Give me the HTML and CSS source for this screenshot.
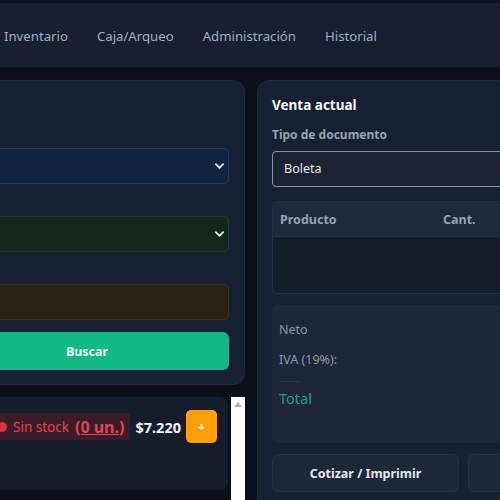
FILE: index.html
```html
<!DOCTYPE html>
<html lang="es">
<head>
  <meta charset="UTF-8">
  <title>Punto de Venta</title>
  <link rel="stylesheet" href="styles.css">
</head>
<body>
  <header class="topbar">
    <nav class="menu">
      <a class="menu-link">Inventario</a>
      <a class="menu-link">Caja/Arqueo</a>
      <a class="menu-link">Administración</a>
      <a class="menu-link">Historial</a>
    </nav>
  </header>

  <main class="layout">
    <section class="col-izq">
      <div class="card buscador">
        <div class="campo campo-primero">
          <div class="selector sel-azul">
            <svg class="chevron" viewBox="0 0 10 6"><path d="M1 1l4 4 4-4" /></svg>
          </div>
        </div>
        <div class="campo">
          <div class="selector sel-verde">
            <svg class="chevron" viewBox="0 0 10 6"><path d="M1 1l4 4 4-4" /></svg>
          </div>
        </div>
        <div class="campo">
          <div class="selector sel-ocre"></div>
        </div>
        <button class="btn-buscar">Buscar</button>
      </div>

      <div class="resultados">
        <div class="lista">
          <div class="item-card">
            <div class="item-fila">
              <span class="stock-badge"><span class="punto"></span>Sin stock <u class="stock-cant">(0 un.)</u></span>
              <span class="precio">$7.220</span>
              <button class="btn-agregar">+</button>
            </div>
          </div>
        </div>
        <div class="scroll-track"><span class="scroll-up"></span></div>
      </div>
    </section>

    <section class="card venta">
      <h2 class="venta-titulo">Venta actual</h2>
      <label class="etiqueta">Tipo de documento</label>
      <div class="doc-select">Boleta</div>

      <div class="tabla">
        <div class="tabla-head">
          <span class="th-producto">Producto</span>
          <span class="th-cant">Cant.</span>
        </div>
        <div class="tabla-body"></div>
      </div>

      <div class="totales">
        <div class="tot-linea">Neto</div>
        <div class="tot-linea">IVA (19%):</div>
        <hr class="tot-sep">
        <div class="tot-total">Total</div>
      </div>

      <div class="acciones">
        <button class="btn-accion">Cotizar / Imprimir</button>
        <button class="btn-accion"></button>
      </div>
    </section>
  </main>
</body>
</html>
```

FILE: styles.css
```css
body {
  margin: 0;
  background: #0b0f19;
  color: #e2e8f0;
  font-family: "Noto Sans", "Open Sans", sans-serif;
  overflow: hidden;
  height: 500px;
}

.topbar {
  border-top: 3px solid #0d1220;
  background: #161e2f;
  height: 64px;
}

.menu {
  display: flex;
  align-items: center;
  height: 100%;
  gap: 29px;
  padding: 2px 0 0 4px;
  box-sizing: border-box;
}

.menu-link {
  color: #a4aebe;
  font-size: 13.2px;
}

.layout {
  display: grid;
  grid-template-columns: 380px 420px;
  gap: 12px;
  margin-left: -135px;
  margin-top: 13px;
}

.card {
  background: #172033;
  border: 1px solid #1f2a3e;
  border-radius: 12px;
}

/* columna izquierda */
.buscador {
  padding: 16px 15px 14px;
  display: flex;
  flex-direction: column;
}

.campo { padding-top: 32px; }
.campo-primero { padding-top: 51px; }

.selector {
  height: 34px;
  border: 1px solid;
  border-radius: 5px;
  display: flex;
  align-items: center;
  justify-content: flex-end;
  padding-right: 4px;
}

.sel-azul { background: #0f2341; border-color: #1e3b62; }
.sel-verde { background: #14261a; border-color: #1f3a26; }
.sel-ocre { background: #282211; border-color: #3a311c; }

.chevron {
  width: 9px;
  height: 6px;
  fill: none;
  stroke: #e5ecf5;
  stroke-width: 2;
  stroke-linecap: round;
  stroke-linejoin: round;
}

.btn-buscar {
  margin-top: 12px;
  height: 38px;
  border: none;
  border-radius: 6px;
  background: #14b886;
  color: #e9fff7;
  font-family: inherit;
  font-size: 12.5px;
  font-weight: 700;
  padding-left: 70px;
}

/* lista de productos con su barra de scroll */
.resultados {
  margin-top: 12px;
  height: 140px;
  display: flex;
}

.lista {
  flex: 1;
  padding-right: 3px;
}

.scroll-track {
  width: 14px;
  background: #fff;
  display: flex;
  justify-content: center;
  padding-top: 5px;
  box-sizing: border-box;
}

.scroll-up {
  width: 0;
  height: 0;
  border-left: 4px solid transparent;
  border-right: 4px solid transparent;
  border-bottom: 5px solid #b0b0b0;
}

.item-card {
  height: 93px;
  background: #151d2d;
  border-radius: 8px;
  padding-top: 13px;
  box-sizing: border-box;
}

.item-fila {
  display: flex;
  align-items: center;
  justify-content: flex-end;
  gap: 5px;
  padding-right: 11px;
}

.stock-badge {
  display: flex;
  align-items: center;
  background: #3a1b27;
  color: #e2454d;
  font-size: 13.5px;
  height: 27px;
  padding: 0 6px 0 40px;
  border-radius: 3px;
}

.punto {
  width: 10px;
  height: 10px;
  border-radius: 50%;
  background: #d9343b;
  margin-right: 6px;
}

.stock-cant {
  font-size: 16px;
  font-weight: 700;
  margin-left: 6px;
}

.precio {
  font-size: 14.5px;
  font-weight: 700;
  color: #f1f5f9;
}

.btn-agregar {
  width: 31px;
  height: 33px;
  border: none;
  border-radius: 5px;
  background: #ff9f0a;
  color: #fff;
  font-size: 11px;
  font-weight: 700;
  padding: 0;
}

/* columna derecha: venta */
.venta {
  padding: 14px 14px;
  height: 480px;
}

.venta-titulo {
  margin: 0;
  font-size: 13.5px;
  font-weight: 700;
  color: #f8fafc;
  line-height: 20px;
}

.etiqueta {
  display: block;
  margin-top: 11px;
  font-size: 12px;
  font-weight: 700;
  color: #9aa3b2;
  line-height: 18px;
}

.doc-select {
  margin-top: 7px;
  height: 34px;
  border: 1px solid #8b94a4;
  border-radius: 4px;
  background: #1a2233;
  color: #e2e8f0;
  font-size: 12.5px;
  line-height: 34px;
  padding-left: 11px;
}

.tabla {
  margin-top: 14px;
  border: 1px solid #243048;
  border-radius: 6px;
  overflow: hidden;
}

.tabla-head {
  display: flex;
  height: 34px;
  align-items: center;
  background: #1f293b;
  border-bottom: 1px solid #27334a;
  font-size: 12.5px;
  font-weight: 700;
  color: #98a2b3;
  padding-left: 7px;
}

.th-producto { width: 163px; }

.tabla-body {
  height: 56px;
  background: #151d2c;
}

.totales {
  margin-top: 11px;
  height: 138px;
  background: #1d2739;
  border-radius: 6px;
  padding: 16px 7px 0;
  box-sizing: border-box;
}

.tot-linea {
  font-size: 12.5px;
  color: #8f99a8;
  line-height: 18px;
  margin-bottom: 12px;
}

.tot-sep {
  width: 20px;
  margin: 0 0 6px;
  border: none;
  border-top: 1px solid #2c374a;
}

.tot-total {
  font-size: 14.5px;
  color: #1f9e83;
  line-height: 20px;
}

.acciones {
  margin-top: 11px;
  display: grid;
  grid-template-columns: 187px 187px;
  gap: 9px;
}

.btn-accion {
  height: 38px;
  background: #1d2739;
  border: 1px solid #253045;
  border-radius: 6px;
  color: #e2e8f0;
  font-family: inherit;
  font-size: 12.5px;
  font-weight: 700;
}
```
